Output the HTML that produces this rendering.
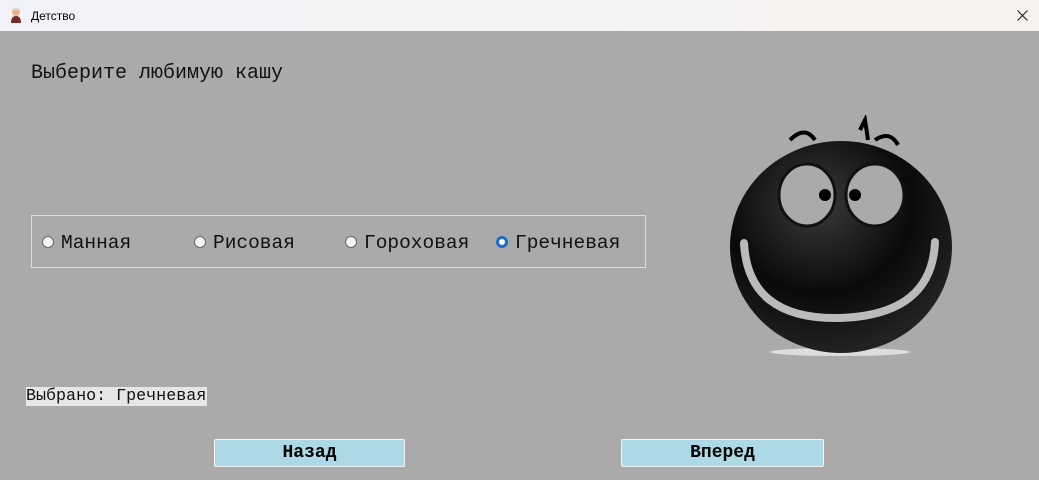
<!DOCTYPE html>
<html><head><meta charset="utf-8"><style>
body{margin:0;width:1039px;height:480px;overflow:hidden;background:#aaa;font-family:"Liberation Mono",monospace;position:relative}
.tb{position:absolute;left:0;top:0;width:1039px;height:31px;background:linear-gradient(90deg,#f1f3f8,#f7f3ef);font-family:"Liberation Sans",sans-serif;font-size:12px}
.t{position:absolute;white-space:nowrap;color:#111}
.rb{position:absolute;top:236px;width:12px;height:12px;border-radius:50%;background:#f4f4f4;border:1px solid #666;box-sizing:border-box}
.sel{border:3px solid #1a6fc9;background:#fff}
.btn{position:absolute;top:439px;height:28px;width:191px;background:#add8e6;border:1.5px solid #f4f4f4;box-sizing:border-box;border-radius:2px;text-align:center;font-weight:bold;font-size:18px;line-height:27px}
</style></head><body>
<div class="tb">
<svg style="position:absolute;left:9px;top:7px" width="14" height="16" viewBox="0 0 14 16"><circle cx="7" cy="5" r="4" fill="#e9b48c"/><path d="M3 3 Q7 0 11 3" stroke="#ddd" stroke-width="2" fill="none"/><path d="M2 16 Q2 9 7 9 Q12 9 12 16Z" fill="#7a2b22"/></svg>
<span style="position:absolute;left:31px;top:9px">Детство</span>
<svg style="position:absolute;left:1017px;top:10px" width="11" height="11"><path d="M0.5 0.5L10.5 10.5M10.5 0.5L0.5 10.5" stroke="#222" stroke-width="1.1"/></svg>
</div>
<div class="t" style="left:31px;top:62px;font-size:20px">Выберите любимую кашу</div>
<div style="position:absolute;left:31px;top:215px;width:615px;height:53px;border:1px solid #ddd;box-sizing:border-box"></div>
<div class="rb" style="left:42px"></div><div class="t" style="left:61px;top:232px;font-size:19.5px">Манная</div>
<div class="rb" style="left:194px"></div><div class="t" style="left:213px;top:232px;font-size:19.5px">Рисовая</div>
<div class="rb" style="left:345px"></div><div class="t" style="left:364px;top:232px;font-size:19.5px">Гороховая</div>
<div class="rb sel" style="left:496px"></div><div class="t" style="left:515px;top:232px;font-size:19.5px">Гречневая</div>
<div class="t" style="left:26px;top:387px;height:19px;line-height:19px;background:#e6e6e6;font-size:16.7px;padding-right:1px">Выбрано: Гречневая</div>
<div class="btn" style="left:214px">Назад</div>
<div class="btn" style="left:621px;width:203px">Вперед</div>
<svg style="position:absolute;left:720px;top:115px" width="250" height="245" viewBox="0 0 250 245">
<defs><radialGradient id="g" cx="0.4" cy="0.3" r="0.7"><stop offset="0" stop-color="#3a3a3a"/><stop offset="0.6" stop-color="#0a0a0a"/><stop offset="1" stop-color="#222"/></radialGradient></defs>
<ellipse cx="120" cy="237" rx="70" ry="4" fill="#ddd"/>
<path d="M70 25 Q85 10 95 25 M140 15 L145 5 L148 25 M155 25 Q170 15 178 30" stroke="#000" stroke-width="4" fill="none"/>
<ellipse cx="121" cy="132" rx="111" ry="106" fill="url(#g)"/>
<ellipse cx="87" cy="80" rx="28" ry="31" fill="#aaa" stroke="#111" stroke-width="3"/>
<ellipse cx="155" cy="80" rx="29" ry="31" fill="#aaa" stroke="#111" stroke-width="3"/>
<circle cx="105" cy="80" r="6" fill="#000"/><circle cx="135" cy="80" r="6" fill="#000"/>
<path d="M24 128 Q28 205 120 203 Q212 200 215 127" stroke="#bbb" stroke-width="8" fill="none" stroke-linecap="round"/>
</svg>
</body></html>
